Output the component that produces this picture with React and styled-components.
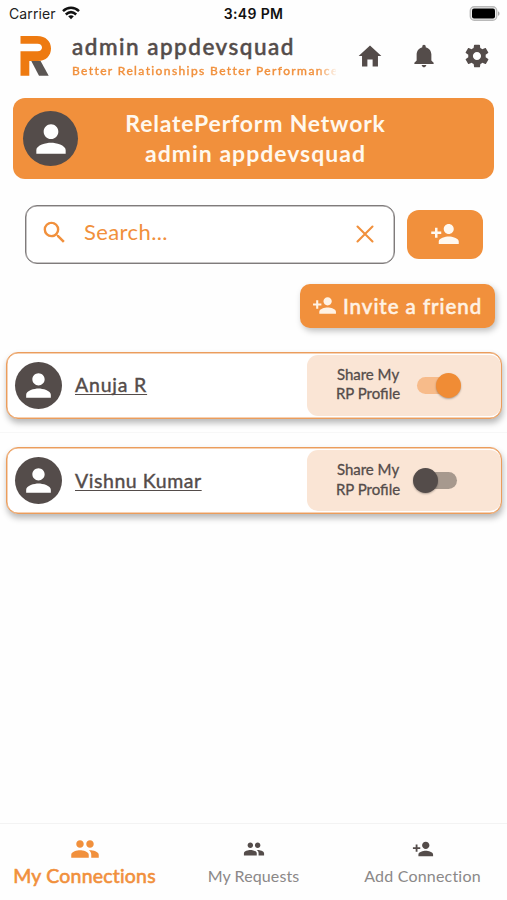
import React from "react";
import styled, { createGlobalStyle } from "styled-components";
import { MdPerson, MdPersonAdd, MdPeople, MdSearch } from "react-icons/md";
import { IoMdHome, IoMdNotifications, IoMdSettings } from "react-icons/io";

const ORANGE = "#f1903c";
const DARK = "#544c4a";

const GlobalStyle = createGlobalStyle`
  * { box-sizing: border-box; }
  body { margin: 0; background: #fefefe; font-family: Lato, "Open Sans", sans-serif; }
  svg { display: block; flex: none; }
`;

const Screen = styled.div`
  width: 507px;
  height: 900px;
  display: flex;
  flex-direction: column;
  overflow: hidden;
  background: #fefefe;
  color: ${DARK};
`;

const StatusBar = styled.div`
  height: 28px;
  padding: 0 7px 2px 9px;
  display: grid;
  grid-template-columns: 1fr auto 1fr;
  align-items: center;
  font-family: Inter, sans-serif;
  font-size: 14px;
  color: #222;
`;

const Carrier = styled.div`
  display: flex;
  align-items: center;
  gap: 6px;
  letter-spacing: 0.1px;
`;

const Clock = styled.div`
  margin-left: -2px;
  font-weight: 600;
  color: #111;
  letter-spacing: 0.35px;
`;

const BatterySlot = styled.div`
  display: flex;
  justify-content: flex-end;
`;

const Header = styled.header`
  height: 70.3px;
  padding-left: 20px;
  display: flex;
  align-items: flex-start;
`;

const LogoSlot = styled.div`
  width: 52px;
  padding-top: 7px;
`;

const Titles = styled.div`
  width: 264px;
  padding-top: 5px;
  overflow: hidden;
  white-space: nowrap;
`;

const Title = styled.div`
  font-size: 22.5px;
  line-height: 28px;
  font-weight: 500;
  letter-spacing: 1.5px;
  -webkit-text-stroke: 0.5px ${DARK};
`;

const Tagline = styled.div`
  font-size: 12px;
  line-height: 18px;
  margin-top: 1px;
  color: ${ORANGE};
  letter-spacing: 1.4px;
  -webkit-text-stroke: 0.4px ${ORANGE};
  mask-image: linear-gradient(90deg, #000 245px, transparent 266px);
`;

const Actions = styled.nav`
  display: flex;
  gap: 25.7px;
  padding: 13.5px 0 0 20px;
`;

const Banner = styled.section`
  height: 81px;
  margin: 0 13px;
  padding-left: 10px;
  display: flex;
  align-items: center;
  border-radius: 12px;
  background: ${ORANGE};
  color: #fff8ee;
`;

const Avatar = styled.div`
  width: ${(p) => p.$size}px;
  height: ${(p) => p.$size}px;
  flex: none;
  border-radius: 50%;
  display: grid;
  place-items: center;
  background: ${DARK};
  color: #fff;
`;

const BannerText = styled.div`
  width: 355px;
  padding-bottom: 1px;
  text-align: center;
  font-size: 23px;
  line-height: 30.5px;
  font-weight: 700;
`;

const BannerLine = styled.div`
  letter-spacing: ${(p) => p.$spacing}px;
`;

const SearchRow = styled.div`
  margin-top: 25.7px;
  padding-left: 25px;
  display: flex;
  align-items: center;
  gap: 12px;
`;

const SearchBox = styled.div`
  width: 370px;
  height: 59px;
  padding: 0 17px 3px 14px;
  display: flex;
  align-items: center;
  border: 1px solid #7f7b7b;
  border-radius: 12px;
  background: #fff;
  box-shadow: inset 0 0 0 0.5px #8f8b8b;
  color: ${ORANGE};
`;

const Placeholder = styled.span`
  flex: 1;
  padding: 0 0 1px 15px;
  font-size: 22px;
  line-height: 30px;
  letter-spacing: 0.4px;
`;

const AddButton = styled.button`
  width: 76px;
  height: 49px;
  padding: 0;
  display: grid;
  place-items: center;
  border: 0;
  border-radius: 12px;
  background: ${ORANGE};
  color: #fff8f0;
`;

const InviteButton = styled.button`
  align-self: flex-end;
  width: 195px;
  height: 44px;
  margin: 20px 12px 0 0;
  padding: 0 0 0 12px;
  display: flex;
  align-items: center;
  gap: 6px;
  border: 0;
  border-radius: 10px;
  background: ${ORANGE};
  color: #fff2e4;
  font: 500 20.5px/28px Lato, sans-serif;
  letter-spacing: 0.95px;
  white-space: nowrap;
  -webkit-text-stroke: 0.5px #fff2e4;
  box-shadow: 2px 3px 6px rgba(0, 0, 0, 0.25);
`;

const List = styled.main`
  flex: 1;
  padding-top: 24px;
`;

const ListItem = styled.div`
  height: 95.5px;
  padding: 0 5px 0 6px;
`;

const ItemRule = styled.div`
  height: 1px;
  margin: 13px -5px 0 -6px;
  background: #f7f7f7;
`;

const Card = styled.article`
  height: 67px;
  padding-left: 8px;
  display: flex;
  align-items: center;
  border: 1px solid #eb9d5c;
  border-radius: 12px;
  background: #fff;
  box-shadow: inset 0 0 0 0.5px #eda468, 1px 4px 6px rgba(0, 0, 0, 0.28);
`;

const Name = styled.a`
  flex: 1;
  padding-left: 13px;
  font-size: 19.5px;
  line-height: 26px;
  letter-spacing: ${(p) => p.$spacing}px;
  text-decoration: underline;
  text-decoration-thickness: 1px;
  text-underline-offset: 2px;
  text-decoration-skip-ink: none;
  -webkit-text-stroke: 0.4px ${DARK};
`;

const SharePanel = styled.div`
  width: 194px;
  height: 61px;
  padding-left: 29px;
  display: flex;
  align-items: center;
  border-radius: 11px;
  background: #fae5d5;
`;

const ShareLabel = styled.div`
  width: 64px;
  padding-bottom: 2px;
  display: flex;
  flex-direction: column;
  align-items: center;
  white-space: nowrap;
  font-size: 15px;
  line-height: 19.5px;
  -webkit-text-stroke: 0.3px ${DARK};
`;

const Toggle = styled.div`
  width: 40px;
  height: 17px;
  margin-left: 17px;
  display: flex;
  align-items: center;
  justify-content: ${(p) => (p.$on ? "flex-end" : "flex-start")};
  border-radius: 9px;
  background: ${(p) => (p.$on ? "#f7bb8a" : "#a7998e")};
`;

const Knob = styled.div`
  width: 25px;
  height: 25px;
  flex: none;
  margin: 0 -4px;
  border-radius: 50%;
  background: ${(p) => (p.$on ? "#f08c35" : DARK)};
  box-shadow: 0 1px 2px rgba(0, 0, 0, 0.3);
`;

const TabBar = styled.nav`
  height: 77px;
  display: grid;
  grid-template-columns: repeat(3, 169px);
  border-top: 1px solid #f3f3f3;
`;

const Tab = styled.div`
  display: grid;
  grid-template-rows: 29.5px 24px;
  align-content: start;
  padding-top: 10px;
  justify-items: center;
  align-items: center;
  color: ${DARK};
`;

const TabLabel = styled.span`
  white-space: nowrap;
  font-size: ${(p) => (p.$active ? 19.5 : 16)}px;
  line-height: ${(p) => (p.$active ? 24 : 23)}px;
  letter-spacing: ${(p) => p.$spacing}px;
  color: ${(p) => (p.$active ? ORANGE : "#8b8888")};
  -webkit-text-stroke: ${(p) => (p.$active ? `0.6px ${ORANGE}` : "0")};
`;

const Logo = () => (
  <svg width="32" height="42" viewBox="0 0 32 42">
    <path d="M.5 1H17C26 1 31 6.500 31 13.500C31 20.500 26 26 18 26H9.300V40.700H.5V16.300H17.500C20.300 16.300 22 14.800 22 12.500C22 10.200 20.300 8.700 17.500 8.700H.5Z" fill="#ee7a10" />
    <path d="M11.300 26H20.600L28.700 40.700H19Z" fill="#5b5654" />
  </svg>
);

const Wifi = () => (
  <svg width="18" height="14" viewBox="0 0 18 14" fill="none" stroke="#111" strokeWidth="2.500">
    <path d="M1 5.100C5.600 .7 12.400 .7 17 5.100" />
    <path d="M3.800 8.500C7 5.600 11 5.600 14.200 8.500" />
    <path d="M6.200 10.300C8 9 10 9 11.800 10.300L9 13.200Z" fill="#111" stroke="none" />
  </svg>
);

const Battery = () => (
  <svg width="31" height="15" viewBox="0 0 31 15">
    <rect x="1.250" y=".75" width="26.500" height="13.500" rx="4" fill="#eee" stroke="#b9b9b9" strokeWidth="1.300" />
    <rect x="3" y="2.500" width="23" height="10" rx="2" fill="#000" />
    <path d="M29 5.200C31 6 31 9 29 9.800Z" fill="#aaa" />
  </svg>
);

const Clear = () => (
  <svg width="24" height="24" viewBox="0 0 24 24" fill="none" stroke={ORANGE} strokeWidth="2.100" strokeLinecap="round">
    <path d="M4.500 5.500L19.500 20.500M19.500 5.500L4.500 20.500" />
  </svg>
);

const connections = [
  { name: "Anuja R", on: true, spacing: 0.8 },
  { name: "Vishnu Kumar", on: false, spacing: 0.55 },
];

export default function App() {
  return (
    <Screen>
      <GlobalStyle />
      <StatusBar>
        <Carrier>
          Carrier <Wifi />
        </Carrier>
        <Clock>3:49 PM</Clock>
        <BatterySlot>
          <Battery />
        </BatterySlot>
      </StatusBar>
      <Header>
        <LogoSlot>
          <Logo />
        </LogoSlot>
        <Titles>
          <Title>admin appdevsquad</Title>
          <Tagline>Better Relationships Better Performance</Tagline>
        </Titles>
        <Actions>
          <IoMdHome size={28} />
          <IoMdNotifications size={28} />
          <IoMdSettings size={28} />
        </Actions>
      </Header>
      <Banner>
        <Avatar $size={55}>
          <MdPerson size={44} />
        </Avatar>
        <BannerText>
          <BannerLine $spacing={0.8}>RelatePerform Network</BannerLine>
          <BannerLine $spacing={1}>admin appdevsquad</BannerLine>
        </BannerText>
      </Banner>
      <SearchRow>
        <SearchBox>
          <MdSearch size={29} />
          <Placeholder>Search...</Placeholder>
          <Clear />
        </SearchBox>
        <AddButton>
          <MdPersonAdd size={30} />
        </AddButton>
      </SearchRow>
      <InviteButton>
        <MdPersonAdd size={25} />
        Invite a friend
      </InviteButton>
      <List>
        {connections.map((c) => (
          <ListItem key={c.name}>
            <Card>
              <Avatar $size={47}>
                <MdPerson size={37} />
              </Avatar>
              <Name $spacing={c.spacing}>{c.name}</Name>
              <SharePanel>
                <ShareLabel>
                  <span>Share My</span>
                  <span>RP Profile</span>
                </ShareLabel>
                <Toggle $on={c.on}>
                  <Knob $on={c.on} />
                </Toggle>
              </SharePanel>
            </Card>
            {c.on && <ItemRule />}
          </ListItem>
        ))}
      </List>
      <TabBar>
        <Tab>
          <MdPeople size={30} color={ORANGE} />
          <TabLabel $active $spacing={0.2}>My Connections</TabLabel>
        </Tab>
        <Tab>
          <MdPeople size={22} />
          <TabLabel $spacing={0.1}>My Requests</TabLabel>
        </Tab>
        <Tab>
          <MdPersonAdd size={22} />
          <TabLabel $spacing={0.2}>Add Connection</TabLabel>
        </Tab>
      </TabBar>
    </Screen>
  );
}
